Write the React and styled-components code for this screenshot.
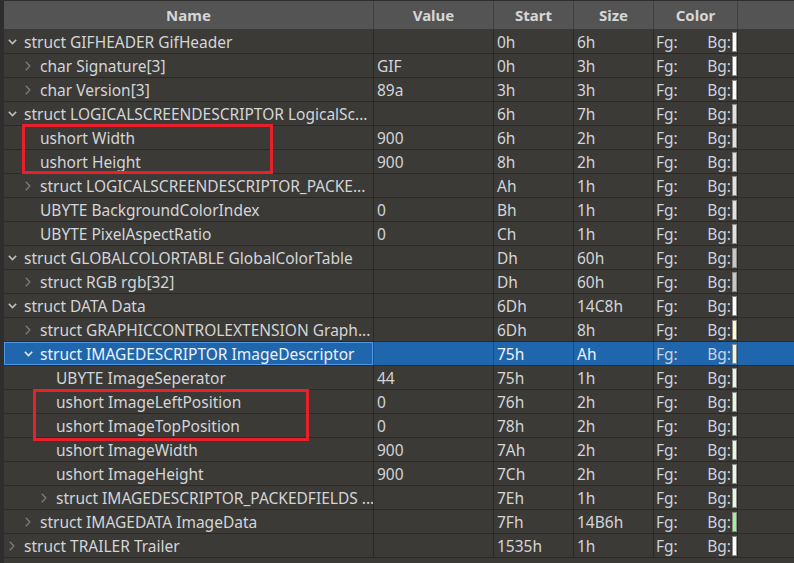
import React from "react";
import styled, { createGlobalStyle, css } from "styled-components";

const GlobalStyle = createGlobalStyle`
  html, body {
    margin: 0;
    padding: 0;
    background: #2e2e2e;
  }
  body {
    font-family: "Noto Sans", "Open Sans", sans-serif;
    width: 794px;
    height: 563px;
    overflow: hidden;
  }
`;

const COLS = "370px 120px 80px 80px 84px 1fr";

const Panel = styled.div`
  position: relative;
  width: 794px;
  height: 563px;
  padding: 1px 0 0 4px;
  box-sizing: border-box;
  background: #2e2e2e;
  overflow: hidden;
`;

const Table = styled.div`
  background: #3b3a37;
  height: 100%;
`;

const HeaderRow = styled.div`
  display: grid;
  grid-template-columns: ${COLS};
  height: 29px;
  background: #545454;
  border-bottom: 1px solid #3a3a3a;
  box-sizing: border-box;
`;

const HeaderCell = styled.div`
  display: flex;
  align-items: center;
  justify-content: center;
  font-weight: 700;
  font-size: 15px;
  color: #d6d6d6;
  border-right: 1px solid #404040;
  &:last-child {
    border-right: none;
  }
`;

const Row = styled.div`
  display: grid;
  grid-template-columns: ${COLS};
  height: 24px;
  border-bottom: 1px solid #2a2a2a;
  box-sizing: border-box;
  color: #d3d5d8;
  font-size: 15.5px;
  ${(p) =>
    p.$selected &&
    css`
      background: #2066ad;
      color: #eef2f8;
    `}
`;

const Cell = styled.div`
  display: flex;
  align-items: center;
  padding-left: 3px;
  padding-top: 1px;
  white-space: nowrap;
  overflow: hidden;
  border-right: 1px solid ${(p) => (p.$selected ? "#1b4f86" : "#2a2a2a")};
  &:last-child {
    border-right: none;
  }
`;

const NameCell = styled(Cell)`
  padding-left: ${(p) => 2 + p.$level * 16}px;
  ${(p) =>
    p.$selected &&
    css`
      box-shadow: inset 0 0 0 1px #4d97e6;
    `}
`;

const Toggle = styled.span`
  display: inline-flex;
  align-items: center;
  justify-content: center;
  width: 12px;
  height: 22px;
  margin-right: 6px;
  flex-shrink: 0;
`;

const ColorCell = styled(Cell)`
  padding-left: 2px;
  padding-right: 0;
  padding-top: 0;
  justify-content: space-between;
  overflow: visible;
`;

const Label = styled.span`
  color: #c9d3de;
  padding-top: 1px;
`;

const BgGroup = styled.span`
  display: flex;
  align-items: center;
`;

const Swatch = styled.span`
  display: inline-block;
  width: 5px;
  height: 20px;
  margin-left: 1px;
  background: ${(p) => p.$color};
  border: 1px solid #8c8c8c;
  box-sizing: border-box;
`;

const Mark = styled.div`
  position: absolute;
  border: 3px solid #e8202a;
  box-sizing: border-box;
  pointer-events: none;
`;

const Chevron = ({ open, selected }) =>
  open ? (
    <svg width="9" height="6" viewBox="0 0 9 6">
      <path
        d="M0.8 0.8 L4.5 4.6 L8.2 0.8"
        fill="none"
        stroke={selected ? "#e6eef8" : "#c4c4c4"}
        strokeWidth="1.5"
      />
    </svg>
  ) : (
    <svg width="6" height="10" viewBox="0 0 6 10">
      <path
        d="M0.8 0.8 L4.8 5 L0.8 9.2"
        fill="none"
        stroke="#7e7e7e"
        strokeWidth="1.3"
      />
    </svg>
  );

const WHITE = "#ffffff";
const GREY = "#e1e1e1";
const DARKGREY = "#c8c8c8";
const YELLOW = "#ffffc6";
const MINT = "#e2fbe2";
const GREEN = "#98f598";

const rows = [
  { lvl: 0, t: "open", name: "struct GIFHEADER GifHeader", v: "", s: "0h", z: "6h", c: WHITE },
  { lvl: 1, t: "closed", name: "char Signature[3]", v: "GIF", s: "0h", z: "3h", c: WHITE },
  { lvl: 1, t: "closed", name: "char Version[3]", v: "89a", s: "3h", z: "3h", c: WHITE },
  { lvl: 0, t: "open", name: "struct LOGICALSCREENDESCRIPTOR LogicalSc...", v: "", s: "6h", z: "7h", c: GREY },
  { lvl: 1, name: "ushort Width", v: "900", s: "6h", z: "2h", c: GREY },
  { lvl: 1, name: "ushort Height", v: "900", s: "8h", z: "2h", c: GREY },
  { lvl: 1, t: "closed", name: "struct LOGICALSCREENDESCRIPTOR_PACKE...", v: "", s: "Ah", z: "1h", c: GREY },
  { lvl: 1, name: "UBYTE BackgroundColorIndex", v: "0", s: "Bh", z: "1h", c: GREY },
  { lvl: 1, name: "UBYTE PixelAspectRatio", v: "0", s: "Ch", z: "1h", c: GREY },
  { lvl: 0, t: "open", name: "struct GLOBALCOLORTABLE GlobalColorTable", v: "", s: "Dh", z: "60h", c: DARKGREY },
  { lvl: 1, t: "closed", name: "struct RGB rgb[32]", v: "", s: "Dh", z: "60h", c: DARKGREY },
  { lvl: 0, t: "open", name: "struct DATA Data", v: "", s: "6Dh", z: "14C8h", c: WHITE },
  { lvl: 1, t: "closed", name: "struct GRAPHICCONTROLEXTENSION Graph...", v: "", s: "6Dh", z: "8h", c: YELLOW },
  { lvl: 1, t: "open", sel: true, name: "struct IMAGEDESCRIPTOR ImageDescriptor", v: "", s: "75h", z: "Ah", c: MINT },
  { lvl: 2, name: "UBYTE ImageSeperator", v: "44", s: "75h", z: "1h", c: MINT },
  { lvl: 2, name: "ushort ImageLeftPosition", v: "0", s: "76h", z: "2h", c: MINT },
  { lvl: 2, name: "ushort ImageTopPosition", v: "0", s: "78h", z: "2h", c: MINT },
  { lvl: 2, name: "ushort ImageWidth", v: "900", s: "7Ah", z: "2h", c: MINT },
  { lvl: 2, name: "ushort ImageHeight", v: "900", s: "7Ch", z: "2h", c: MINT },
  { lvl: 2, t: "closed", name: "struct IMAGEDESCRIPTOR_PACKEDFIELDS ...", v: "", s: "7Eh", z: "1h", c: MINT },
  { lvl: 1, t: "closed", name: "struct IMAGEDATA ImageData", v: "", s: "7Fh", z: "14B6h", c: GREEN },
  { lvl: 0, t: "closed", name: "struct TRAILER Trailer", v: "", s: "1535h", z: "1h", c: WHITE },
];

export default function App() {
  return (
    <>
      <GlobalStyle />
      <Panel>
        <Table>
          <HeaderRow>
            <HeaderCell>Name</HeaderCell>
            <HeaderCell>Value</HeaderCell>
            <HeaderCell>Start</HeaderCell>
            <HeaderCell>Size</HeaderCell>
            <HeaderCell>Color</HeaderCell>
            <HeaderCell />
          </HeaderRow>
          {rows.map((r, i) => (
            <Row key={i} $selected={r.sel}>
              <NameCell $level={r.lvl} $selected={r.sel}>
                <Toggle>{r.t && <Chevron open={r.t === "open"} selected={r.sel} />}</Toggle>
                {r.name}
              </NameCell>
              <Cell $selected={r.sel}>{r.v}</Cell>
              <Cell $selected={r.sel}>{r.s}</Cell>
              <Cell $selected={r.sel}>{r.z}</Cell>
              <ColorCell $selected={r.sel}>
                <Label>Fg:</Label>
                <BgGroup>
                  <Label>Bg:</Label>
                  <Swatch $color={r.c} />
                </BgGroup>
              </ColorCell>
              <Cell $selected={r.sel} />
            </Row>
          ))}
        </Table>
        <Mark style={{ left: 22, top: 124, width: 251, height: 50 }} />
        <Mark style={{ left: 33, top: 389, width: 276, height: 52 }} />
      </Panel>
    </>
  );
}
